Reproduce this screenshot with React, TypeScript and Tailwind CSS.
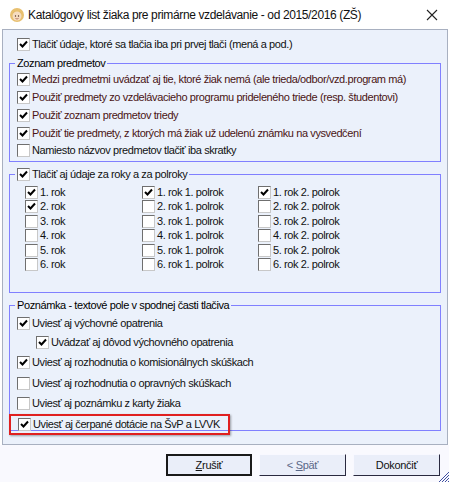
import React from "react";

const font = { fontFamily: '"Liberation Sans", Arial, sans-serif' };

const Check = ({ checked }: { checked?: boolean }) => (
  <span className="relative inline-block w-[13px] h-[13px] shrink-0 bg-white border border-t-[#6f6f6f] border-l-[#6f6f6f] border-b-[#c8c8c8] border-r-[#c8c8c8]">
    {checked && (
      <svg width="11" height="11" viewBox="0 0 11 11" className="absolute left-0 top-0">
        <path d="M2 5 L4.5 7.5 L9 2.5" stroke="#000" strokeWidth="2" fill="none" />
      </svg>
    )}
  </span>
);

const Row = ({
  checked,
  label,
  className = "",
  textClass = "text-[#111]",
}: {
  checked?: boolean;
  label: string;
  className?: string;
  textClass?: string;
}) => (
  <div className={`flex items-center gap-[2px] ${className}`}>
    <Check checked={checked} />
    <span className={`text-[11px] leading-none tracking-[-0.4px] whitespace-nowrap ${textClass}`}>{label}</span>
  </div>
);

const years = [1, 2, 3, 4, 5, 6];

export default function App() {
  return (
    <div className="w-[449px] h-[482px] bg-white flex flex-col overflow-hidden text-black" style={font}>
      {/* title bar */}
      <div className="h-[29px] flex items-center shrink-0">
        <svg width="16" height="16" viewBox="0 0 16 16" className="ml-[9px]">
          <circle cx="8" cy="8" r="7" fill="#e8c070" />
          <circle cx="8" cy="9" r="4.5" fill="#f6dcc0" />
          <path d="M3 7 Q8 1 13 7 Q11 4 8 4 Q5 4 3 7Z" fill="#c89030" />
          <circle cx="6.5" cy="9" r="0.7" fill="#503020" />
          <circle cx="9.5" cy="9" r="0.7" fill="#503020" />
          <path d="M6.5 11.5 Q8 12.5 9.5 11.5" stroke="#a05040" strokeWidth="0.7" fill="none" />
        </svg>
        <span className="ml-[3px] text-[12px] tracking-[-0.37px] text-[#111]">
          Katalógový list žiaka pre primárne vzdelávanie - od 2015/2016 (ZŠ)
        </span>
        <svg width="12" height="12" viewBox="0 0 12 12" className="ml-auto mr-[11px]">
          <path d="M1 1 L11 11 M11 1 L1 11" stroke="#222" strokeWidth="1.1" />
        </svg>
      </div>

      {/* main panel */}
      <div className="ml-[2px] mr-[1px] h-[416px] shrink-0 border border-[#a8b0c0] bg-[#ebf1fb] px-[6px] flex flex-col">
        <div className="h-[28px] flex items-center pl-[8px]">
          <Row checked label="Tlačiť údaje, ktoré sa tlačia iba pri prvej tlači (mená a pod.)" />
        </div>

        <fieldset className="border border-[#8080ff] h-[104px]">
          <legend className="text-[11px] tracking-[-0.4px] ml-[5px] px-[2px] leading-none">Zoznam predmetov</legend>
          <div className="flex flex-col pl-[7px] pt-[2px]">
            <Row checked textClass="text-[#4a1414]" className="h-[17.75px]" label="Medzi predmetmi uvádzať aj tie, ktoré žiak nemá (ale trieda/odbor/vzd.program má)" />
            <Row checked textClass="text-[#4a1414]" className="h-[17.75px]" label="Použiť predmety zo vzdelávacieho programu prideleného triede (resp. študentovi)" />
            <Row checked textClass="text-[#4a1414]" className="h-[17.75px]" label="Použiť zoznam predmetov triedy" />
            <Row checked textClass="text-[#4a1414]" className="h-[17.75px]" label="Použiť tie predmety, z ktorých má žiak už udelenú známku na vysvedčení" />
            <Row className="h-[17.75px]" label="Namiesto názvov predmetov tlačiť iba skratky" />
          </div>
        </fieldset>

        <fieldset className="border border-[#8080ff] h-[125px] mt-[6px]">
          <legend className="ml-[5px] px-[2px] leading-none">
            <Row checked label="Tlačiť aj údaje za roky a za polroky" />
          </legend>
          <div className="grid grid-cols-[117px_116px_1fr] pl-[15px] pt-[4px]">
            {years.map((y) => (
              <React.Fragment key={y}>
                <Row checked={y <= 2} className="h-[14.5px]" label={`${y}. rok`} />
                <Row checked={y === 1} className="h-[14.5px]" label={`${y}. rok 1. polrok`} />
                <Row checked={y === 1} className="h-[14.5px]" label={`${y}. rok 2. polrok`} />
              </React.Fragment>
            ))}
          </div>
        </fieldset>

        <fieldset className="border border-[#8080ff] h-[131px] mt-[7px]">
          <legend className="text-[11px] tracking-[-0.4px] ml-[5px] px-[2px] leading-none">
            Poznámka - textové pole v spodnej časti tlačiva
          </legend>
          <div className="flex flex-col pl-[7px] pt-[3px]">
            <Row checked className="h-[19px]" label="Uviesť aj výchovné opatrenia" />
            <Row checked className="h-[19.5px] pl-[19px]" label="Uvádzať aj dôvod výchovného opatrenia" />
            <Row checked className="h-[20.5px]" label="Uviesť aj rozhodnutia o komisionálnych skúškach" />
            <Row className="h-[20.5px]" label="Uviesť aj rozhodnutia o opravných skúškach" />
            <Row className="h-[20px]" label="Uviesť aj poznámku z karty žiaka" />
            <div className="-ml-[8px] w-[221px] h-[21px] border-2 border-[#e02020] shadow-[1px_1px_2px_rgba(0,0,0,0.35)] flex items-center pl-[7px]">
              <Row checked label="Uviesť aj čerpané dotácie na ŠvP a LVVK" />
            </div>
          </div>
        </fieldset>
      </div>

      {/* bottom buttons */}
      <div className="flex-1 bg-[#f9f9fe] relative">
        <div className="flex gap-[7px] pl-[166px] pt-[9px]">
          <button className="w-[86px] h-[22px] bg-[#eaeef9] border-2 border-[#1a1a1a] text-[11px] tracking-[-0.3px] text-[#111]">
            <span className="underline">Z</span>rušiť
          </button>
          <button className="w-[87px] h-[22px] bg-[#eaeef9] border border-t-[#f8f8ff] border-l-[#f8f8ff] border-b-[#2a2a40] border-r-[#2a2a40] text-[11px] tracking-[-0.3px] text-[#5a6888]">
            &lt; <span className="underline">S</span>päť
          </button>
          <button className="w-[87px] h-[22px] bg-[#eaeef9] border border-t-[#f8f8ff] border-l-[#f8f8ff] border-b-[#2a2a40] border-r-[#2a2a40] text-[11px] tracking-[-0.3px] text-[#111]">
            Dokončiť
          </button>
        </div>
        <svg width="12" height="12" viewBox="0 0 12 12" className="absolute right-0 bottom-0">
          <path d="M12 2 L2 12 M12 5 L5 12 M12 8 L8 12 M12 11 L11 12" stroke="#4050a0" strokeWidth="1" />
        </svg>
      </div>
    </div>
  );
}
